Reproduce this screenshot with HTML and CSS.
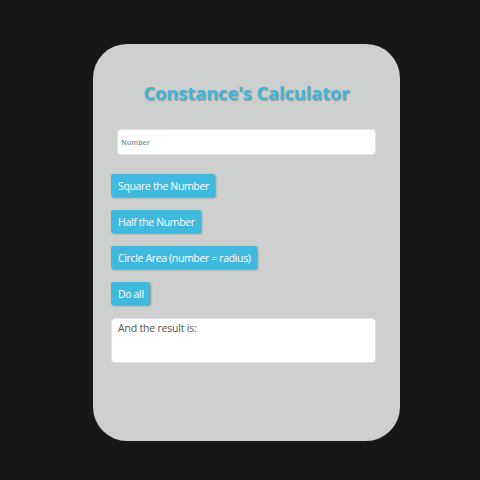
FILE: index.html
```html
<!DOCTYPE html>
<html>
<head>
<meta charset="utf-8">
<link rel="stylesheet" href="styles.css">
</head>
<body>
<div class="card">
  <h1 class="title">Constance's Calculator</h1>
  <input class="number" type="text" placeholder="Number">
  <div class="buttons">
    <button class="btn">Square the Number</button>
    <button class="btn">Half the Number</button>
    <button class="btn">Circle Area (number = radius)</button>
    <button class="btn">Do all</button>
  </div>
  <div class="result">And the result is:</div>
</div>
</body>
</html>
```

FILE: styles.css
```css
html, body {
  margin: 0;
  padding: 0;
  background: #171717;
  font-family: "Open Sans", "Noto Sans", sans-serif;
}
body {
  padding-top: 44px;
  padding-left: 93px;
}
.card {
  width: 307px;
  height: 397px;
  box-sizing: border-box;
  background: #cdd0cf;
  border-radius: 34px;
  padding: 34px 24px 0 18px;
  display: flex;
  flex-direction: column;
}
.title {
  margin: 0 0 21px 6px;
  text-align: center;
  font-size: 18.5px;
  font-weight: 700;
  color: #45b3d6;
  text-shadow: 1px 1px 1px rgba(0,0,0,0.25);
  letter-spacing: -0.2px;
  line-height: 30px;
}
.number {
  margin: 0 0 19px 6px;
  height: 26px;
  box-sizing: border-box;
  border: 1px solid #e2e4e4;
  border-radius: 4px;
  background: #fff;
  font-family: inherit;
  font-size: 7px;
  font-weight: 700;
  padding: 0 3px;
  outline: none;
}
.number::placeholder {
  color: #9a9a9a;
}
.buttons {
  display: flex;
  flex-direction: column;
  align-items: flex-start;
  gap: 13px;
}
.btn {
  height: 23px;
  padding: 0 6px 0 7px;
  border: none;
  border-radius: 2px;
  background: #40b9df;
  color: #fff;
  font-family: inherit;
  font-size: 10.5px;
  letter-spacing: -0.35px;
  box-shadow: 1px 1px 2px rgba(0,0,0,0.3);
  cursor: pointer;
}
.result {
  margin-top: 13px;
  height: 45px;
  box-sizing: border-box;
  background: #fff;
  border: 1px solid #e0e2e2;
  border-radius: 4px;
  padding: 2px 6px;
  font-size: 10.5px;
  color: #555;
  letter-spacing: -0.2px;
}
```
